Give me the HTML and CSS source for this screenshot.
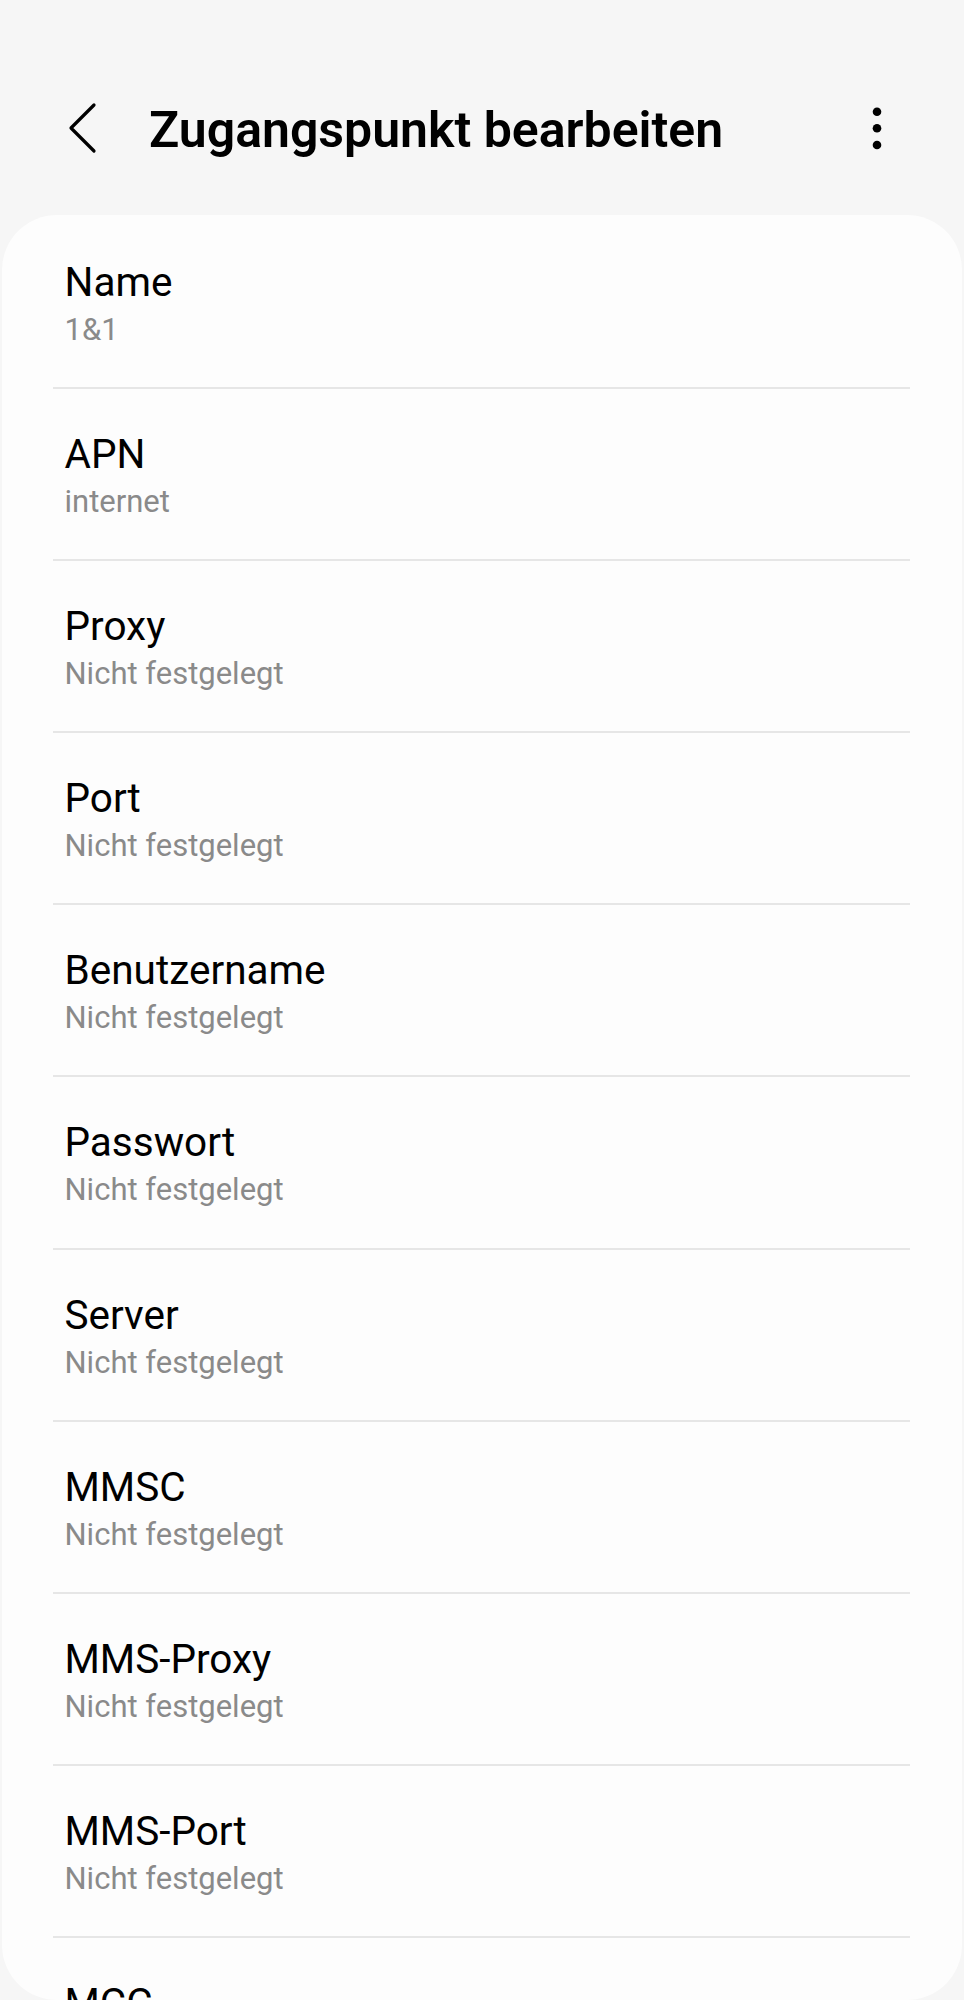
FILE: index.html
```html
<html>
<head>
    <title>Zugangspunkt bearbeiten</title>
    <meta http-equiv="content-type" content="text/html; charset=UTF-8">
    <meta name="viewport" content="width=device-width, initial-scale=1">
    <link rel="stylesheet" href="styles.css">
</head>
<body>
    <div class="appbar">
        <svg class="back" width="40" height="60" viewBox="0 0 40 60">
            <path d="M34 5 L11 28 L34 51" fill="none" stroke="#000" stroke-width="3.2" stroke-linecap="round" stroke-linejoin="round" />
        </svg>
        <div class="title">Zugangspunkt bearbeiten</div>
        <svg class="more" width="20" height="60" viewBox="0 0 20 60">
            <circle cx="10" cy="11.7" r="4.3" fill="#000" />
            <circle cx="10" cy="28.3" r="4.3" fill="#000" />
            <circle cx="10" cy="45" r="4.3" fill="#000" />
        </svg>
    </div>

    <div class="card">
        <div class="row">
            <div class="label">Name</div>
            <div class="value">1&amp;1</div>
        </div>
        <div class="row">
            <div class="label">APN</div>
            <div class="value">internet</div>
        </div>
        <div class="row">
            <div class="label">Proxy</div>
            <div class="value">Nicht festgelegt</div>
        </div>
        <div class="row">
            <div class="label">Port</div>
            <div class="value">Nicht festgelegt</div>
        </div>
        <div class="row">
            <div class="label">Benutzername</div>
            <div class="value">Nicht festgelegt</div>
        </div>
        <div class="row">
            <div class="label">Passwort</div>
            <div class="value">Nicht festgelegt</div>
        </div>
        <div class="row">
            <div class="label">Server</div>
            <div class="value">Nicht festgelegt</div>
        </div>
        <div class="row">
            <div class="label">MMSC</div>
            <div class="value">Nicht festgelegt</div>
        </div>
        <div class="row">
            <div class="label">MMS-Proxy</div>
            <div class="value">Nicht festgelegt</div>
        </div>
        <div class="row">
            <div class="label">MMS-Port</div>
            <div class="value">Nicht festgelegt</div>
        </div>
        <div class="row">
            <div class="label">MCC</div>
            <div class="value">262</div>
        </div>
    </div>
</body>
</html>
```

FILE: styles.css
```css
body {
    margin: 0;
    background: #f6f6f6;
    font-family: Roboto, 'Noto Sans', sans-serif;
    color: #000;
}

.appbar {
    display: flex;
    align-items: center;
    height: 80px;
    margin-top: 90px;
    padding-left: 60px;
}

.back {
    display: block;
    margin-right: 49px;
}

.title {
    flex: 1;
    font-size: 50px;
    font-weight: 600;
    line-height: 56px;
}

.more {
    display: block;
    margin-right: 77px;
}

.card {
    margin: 45px 2px 0;
    height: 1783.5px;
    overflow: hidden;
    background: #fdfdfd;
    border-radius: 55px;
    padding: 1.5px 52px 0 51px;
}

.row {
    padding: 41px 0 37.2px 11.5px;
    border-bottom: 2px solid #e6e6e6;
}

.label {
    font-size: 40.5px;
    line-height: 48px;
}

.value {
    margin-top: 4px;
    font-size: 31px;
    line-height: 40px;
    color: #8a8a8a;
}
```
